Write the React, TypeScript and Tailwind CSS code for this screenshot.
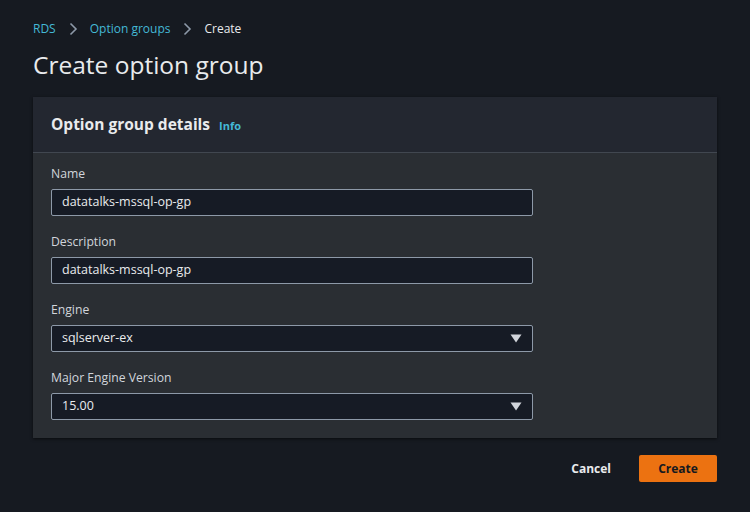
import React from "react";

function Chevron() {
  return (
    <svg width="10" height="14" viewBox="0 0 10 14" className="mx-[12px]">
      <path d="M2.5 1.5 L8 7 L2.5 12.5" fill="none" stroke="#8d99a8" strokeWidth="1.6" />
    </svg>
  );
}

function Caret() {
  return (
    <svg width="12" height="9" viewBox="0 0 12 9">
      <path d="M0.5 0.5 H11.5 L6 8.5 Z" fill="#d1d5db" />
    </svg>
  );
}

function Field({ label, value, select }: { label: string; value: string; select?: boolean }) {
  return (
    <div className="flex flex-col">
      <div className="text-[12.2px] leading-[18px] text-[#d1d5db] mb-[6px]">{label}</div>
      <div className="w-[482px] h-[27px] border border-[#8d99a8] rounded-[2px] bg-[#161b25] flex items-center justify-between pl-[10px] pr-[10px]">
        <span className="text-[12.5px] text-[#e9ebed]">{value}</span>
        {select && <Caret />}
      </div>
    </div>
  );
}

export default function App() {
  return (
    <div
      className="w-[750px] h-[512px] bg-[#161a21] overflow-hidden"
      style={{ fontFamily: '"Open Sans", "Noto Sans", sans-serif' }}
    >
      <div className="pl-[33px] pr-[33px] pt-[19px]">
        <div className="flex items-center text-[12px] h-[20px]">
          <span className="text-[#44b9d6]">RDS</span>
          <Chevron />
          <span className="text-[#44b9d6]">Option groups</span>
          <Chevron />
          <span className="text-[#e9ebed]">Create</span>
        </div>
        <h1 className="text-[24.5px] leading-[34px] text-[#e9ebed] mt-[9px] font-normal">Create option group</h1>
        <div className="mt-[15px] w-[684px] bg-[#2a2e33] shadow-[0_1px_3px_rgba(0,0,0,0.6)]">
          <div className="h-[56px] bg-[#232730] border-b border-[#414750] flex items-center pl-[18px]">
            <span className="text-[15.5px] font-bold text-[#e9ebed]">Option group details</span>
            <span className="text-[11px] font-bold text-[#44b9d6] ml-[9px] mt-[3px]">Info</span>
          </div>
          <div className="pl-[18px] pt-[12px] pb-[18px] flex flex-col gap-[17px]">
            <Field label="Name" value="datatalks-mssql-op-gp" />
            <Field label="Description" value="datatalks-mssql-op-gp" />
            <Field label="Engine" value="sqlserver-ex" select />
            <Field label="Major Engine Version" value="15.00" select />
          </div>
        </div>
        <div className="flex justify-end items-center mt-[17px] w-[684px]">
          <span className="text-[12px] font-bold text-[#e9ebed] mr-[28px]">Cancel</span>
          <div className="w-[78px] h-[27px] bg-[#ec7211] rounded-[2px] flex items-center justify-center text-[12px] font-bold text-[#16191f]">
            Create
          </div>
        </div>
      </div>
    </div>
  );
}
